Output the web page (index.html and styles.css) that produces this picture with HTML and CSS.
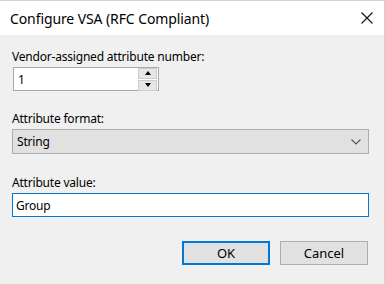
FILE: index.html
```html
<!DOCTYPE html>
<html lang="en">
<head>
<meta charset="UTF-8" />
<meta name="viewport" content="width=device-width, initial-scale=1" />
<title>Configure VSA (RFC Compliant)</title>
<link rel="stylesheet" href="styles.css">
</head>
<body>
<div class="window">
  <div class="titlebar">
    <span class="title">Configure VSA (RFC Compliant)</span>
    <svg class="close" width="12" height="12" viewBox="0 0 12 12">
      <path d="M0.5 0.5 L11.5 11.5 M11.5 0.5 L0.5 11.5" stroke="#111" stroke-width="1.1" fill="none" />
    </svg>
  </div>

  <div class="content">
    <label class="lbl">Vendor-assigned attribute number:</label>
    <div class="spin">
      <span class="val">1</span>
      <div class="spin-btns">
        <span class="spin-btn"><i class="tri up"></i></span>
        <span class="spin-btn"><i class="tri down"></i></span>
      </div>
    </div>

    <label class="lbl">Attribute format:</label>
    <div class="combo">
      <span class="val">String</span>
      <svg class="chev" width="10" height="6" viewBox="0 0 10 6">
        <path d="M0.5 0.5 L5 5 L9.5 0.5" stroke="#555" stroke-width="1.1" fill="none" />
      </svg>
    </div>

    <label class="lbl">Attribute value:</label>
    <div class="textbox">Group</div>

    <div class="buttons">
      <button class="btn default">OK</button>
      <button class="btn">Cancel</button>
    </div>
  </div>
</div>
</body>
</html>
```

FILE: styles.css
```css
html, body { margin: 0; padding: 0; }
body { background: #f0f0f0; font-family: "Noto Sans", "Open Sans", sans-serif; color: #000; }

.window { width: 385px; height: 284px; box-sizing: border-box; border-top: 1px solid #d4d4d4; border-right: 1px solid #cfcfcf; background: #f0f0f0; display: flex; flex-direction: column; }

.titlebar { height: 34px; background: #fff; display: flex; align-items: center; justify-content: space-between; padding: 0 11px 0 10px; }
.title { font-size: 14px; color: #000; letter-spacing: -0.1px; }
.close { display: block; }

.content { display: flex; flex-direction: column; padding: 14px 15px 0 12px; }

.lbl { font-size: 12px; line-height: 16px; height: 16px; letter-spacing: -0.2px; }
.lbl + .spin { margin-top: 2px; }
.spin + .lbl { margin-top: 20px; }
.lbl + .combo { margin-top: 2px; }
.combo + .lbl { margin-top: 21px; }
.lbl + .textbox { margin-top: 2px; }

.val { font-size: 12px; letter-spacing: -0.2px; }

.spin { width: 146px; height: 24px; margin-left: 1px; box-sizing: border-box; border: 1px solid #a9a9a9; background: #fff; display: flex; align-items: center; justify-content: space-between; padding: 0 1px 0 4px; }
.spin-btns { display: flex; flex-direction: column; gap: 1px; }
.spin-btn { width: 17px; height: 9px; background: #e6e6e6; border: 1px solid #cdcdcd; display: flex; align-items: center; justify-content: center; }
.tri { width: 0; height: 0; border-left: 3.5px solid transparent; border-right: 3.5px solid transparent; }
.tri.up { border-bottom: 4px solid #000; }
.tri.down { border-top: 4px solid #000; }

.combo { height: 25px; box-sizing: border-box; border: 1px solid #adadad; background: #e1e1e1; display: flex; align-items: center; justify-content: space-between; padding: 0 7px 0 4px; }
.chev { display: block; }

.textbox { height: 24px; box-sizing: border-box; border: 1px solid #0078d7; background: #fff; font-size: 12px; letter-spacing: -0.2px; display: flex; align-items: center; padding: 0 3px; }

.buttons { display: flex; justify-content: flex-end; gap: 10px; margin-top: 24px; padding-right: 1px; }
.btn { width: 88px; height: 24px; box-sizing: border-box; background: #e1e1e1; border: 1px solid #adadad; font-family: inherit; font-size: 13px; color: #000; padding: 0; }
.btn.default { border: 2px solid #0078d7; }
```
